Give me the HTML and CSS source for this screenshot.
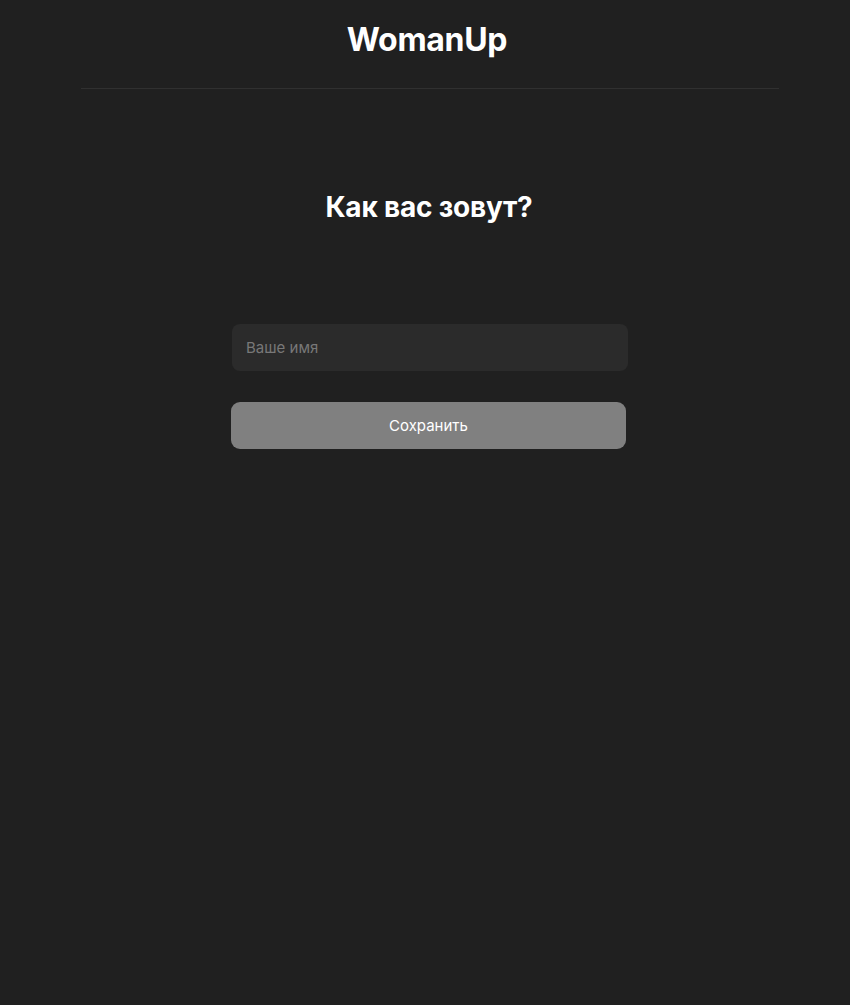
FILE: index.html
```html
<!DOCTYPE html>
<html lang="ru">
<head>
<meta charset="utf-8">
<title>WomanUp</title>
<link rel="stylesheet" href="styles.css">
</head>
<body>
<div class="page">
  <header class="header">
    <h1 class="logo">WomanUp</h1>
  </header>
  <main class="main">
    <h2 class="question">Как вас зовут?</h2>
    <form class="form">
      <input class="name-input" type="text" placeholder="Ваше имя">
      <button class="save-btn" type="button">Сохранить</button>
    </form>
  </main>
</div>
</body>
</html>
```
FILE: styles.css
```css
html, body {
  margin: 0;
  padding: 0;
  background: #202020;
  height: 100%;
}
body {
  font-family: Inter, "Noto Sans", sans-serif;
  color: #fff;
}
.page {
  min-height: 1005px;
}
.header {
  margin: 0 71px 0 81px;
  border-bottom: 1px solid #303030;
  height: 88px;
  display: flex;
  justify-content: center;
}
.logo {
  margin: 20px 0 0 -6px;
  font-size: 32px;
  font-weight: 700;
  line-height: 40px;
  letter-spacing: -0.3px;
}
.main {
  display: flex;
  flex-direction: column;
  align-items: center;
  padding-left: 8px;
}
.question {
  margin: 100px 0 0 0;
  font-size: 28px;
  font-weight: 700;
  line-height: 36px;
  letter-spacing: -0.2px;
}
.form {
  margin-top: 99px;
  width: 396px;
  display: flex;
  flex-direction: column;
  gap: 31px;
}
.name-input {
  box-sizing: border-box;
  height: 47px;
  width: 396px;
  margin-left: 1px;
  border: none;
  border-radius: 8px;
  background: #2b2b2b;
  padding: 0 14px;
  font-family: Inter, "Noto Sans", sans-serif;
  font-size: 15px;
  color: #fff;
  outline: none;
}
.name-input::placeholder {
  color: #787878;
}
.save-btn {
  box-sizing: border-box;
  height: 47px;
  width: 395px;
  border: none;
  border-radius: 9px;
  background: #808080;
  color: #fff;
  font-family: Inter, "Noto Sans", sans-serif;
  font-size: 15px;
  cursor: pointer;
}
```
